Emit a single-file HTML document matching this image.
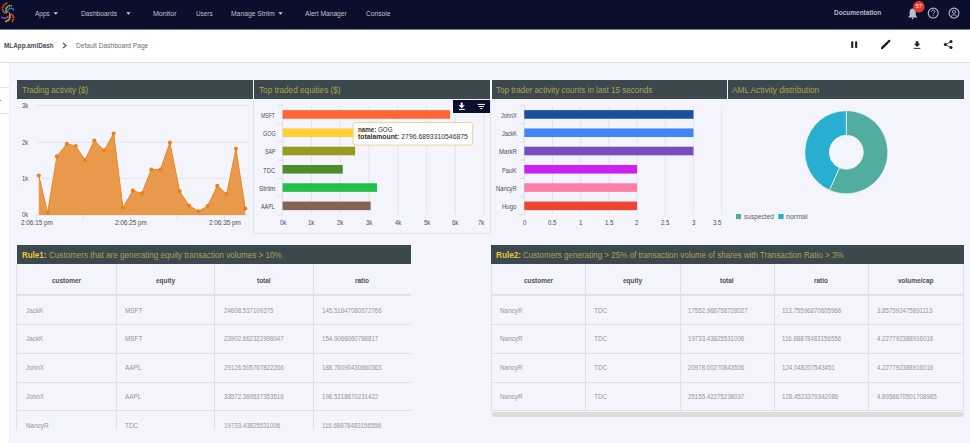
<!DOCTYPE html>
<html><head><meta charset="utf-8">
<style>
html,body{margin:0;padding:0;}
body{width:970px;height:443px;overflow:hidden;position:relative;background:#f4f4fc;font-family:"Liberation Sans",sans-serif;-webkit-font-smoothing:antialiased;}
.t{position:absolute;white-space:nowrap;transform-origin:0 0;}
.b{position:absolute;background:#e0e0e6;}
#nav{position:absolute;left:0;top:0;width:970px;height:29px;background:#0b0e2d;}
#navline{position:absolute;left:0;top:29px;width:970px;height:1px;background:#7d7f90;}
#crumb{position:absolute;left:0;top:30px;width:970px;height:32px;background:#fff;}
#crumbline{position:absolute;left:0;top:62px;width:970px;height:1px;background:#dcdce4;}
#strip{position:absolute;left:0;top:63px;width:9px;height:380px;background:#fff;border-right:1px solid #efeff5;}
.hdr{position:absolute;top:80px;height:18.8px;background:#3b494f;}
.rhdr{position:absolute;top:245px;height:19px;background:#3b494f;}
</style></head><body>
<div id="nav"></div>
<div id="navline"></div>
<div id="crumb"></div>
<div id="crumbline"></div>
<div id="strip"></div>
<div class="b" style="left:0;top:87px;width:9px;height:1px;background:#dde6ea"></div>
<div class="b" style="left:0;top:113px;width:9px;height:1px;background:#dde6ea"></div>
<div class="b" style="left:0;top:100px;width:1.3px;height:1px;background:#8a8a8a"></div>

<!-- panel borders row1 -->
<div class="b" style="left:253px;top:98.8px;width:1px;height:135px;background:#e2e2e8"></div>
<div class="b" style="left:489.5px;top:98.8px;width:1px;height:135px;background:#e2e2e8"></div>
<div class="b" style="left:253px;top:233px;width:237px;height:1px;background:#e2e2e8"></div>

<div class="hdr" style="left:17.2px;width:235.4px"></div>
<div class="hdr" style="left:254.2px;width:235.6px"></div>
<div class="hdr" style="left:491.5px;width:235.5px"></div>
<div class="hdr" style="left:728.1px;width:235.9px"></div>

<div class="rhdr" style="left:17.2px;width:393.6px"></div>
<div class="rhdr" style="left:491.3px;width:472.4px"></div>

<div class=b style='left:16px;top:264px;width:1px;height:166px'></div>
<div class=b style='left:116px;top:264px;width:1px;height:166px'></div>
<div class=b style='left:214px;top:264px;width:1px;height:166px'></div>
<div class=b style='left:313px;top:264px;width:1px;height:166px'></div>
<div class=b style='left:16px;top:293.6px;width:395px;height:2px'></div>
<div class=b style='left:16px;top:324px;width:395px;height:1px'></div>
<div class=b style='left:16px;top:353px;width:395px;height:1px'></div>
<div class=b style='left:16px;top:382px;width:395px;height:1px'></div>
<div class=b style='left:16px;top:410px;width:395px;height:1px'></div>
<div class=b style='left:491px;top:264px;width:1px;height:148px'></div>
<div class=b style='left:585px;top:264px;width:1px;height:148px'></div>
<div class=b style='left:680px;top:264px;width:1px;height:148px'></div>
<div class=b style='left:774px;top:264px;width:1px;height:148px'></div>
<div class=b style='left:868px;top:264px;width:1px;height:148px'></div>
<div class=b style='left:963px;top:264px;width:1px;height:148px'></div>
<div class=b style='left:491px;top:293.6px;width:472px;height:2px'></div>
<div class=b style='left:491px;top:324px;width:472px;height:1px'></div>
<div class=b style='left:491px;top:353px;width:472px;height:1px'></div>
<div class=b style='left:491px;top:382px;width:472px;height:1px'></div>
<div class=b style='left:491px;top:410px;width:472px;height:1px'></div>
<div style='position:absolute;left:491.5px;top:411.8px;width:472px;height:4.8px;border-radius:2.4px;background:#dcdcdc'></div>

<svg width="970" height="443" style="position:absolute;left:0;top:0">
<line x1='37' y1='105.4' x2='248' y2='105.4' stroke='#dfdfe7' stroke-width='0.8'/>
<line x1='37' y1='142.3' x2='248' y2='142.3' stroke='#dfdfe7' stroke-width='0.8'/>
<line x1='37' y1='178.4' x2='248' y2='178.4' stroke='#dfdfe7' stroke-width='0.8'/>
<line x1='37' y1='214.9' x2='248' y2='214.9' stroke='#d8d8e0' stroke-width='0.8'/>
<line x1='36.6' y1='214.9' x2='36.6' y2='219.8' stroke='#d8d8e0' stroke-width='0.8'/>
<line x1='83.5' y1='214.9' x2='83.5' y2='219.8' stroke='#d8d8e0' stroke-width='0.8'/>
<line x1='130.5' y1='214.9' x2='130.5' y2='219.8' stroke='#d8d8e0' stroke-width='0.8'/>
<line x1='177.5' y1='214.9' x2='177.5' y2='219.8' stroke='#d8d8e0' stroke-width='0.8'/>
<line x1='224.4' y1='214.9' x2='224.4' y2='219.8' stroke='#d8d8e0' stroke-width='0.8'/>
<polygon points='38.8,214.9 38.8,175.5 47.6,212.7 56.9,156.4 66.8,143.9 75.7,146 85.0,160.1 94.3,140.6 104.1,150.4 113.7,133.5 122.9,207.6 132.9,190.7 141.8,193.4 151.3,169.6 160.4,169.6 169.9,142.6 179.6,191.2 189,205.6 198.4,211.3 207.6,206.1 217.3,185.8 226.7,194 235.9,148.8 245.3,208.6 245.3,214.9' fill='#e9994b' />
<polyline points='38.8,175.5 47.6,212.7 56.9,156.4 66.8,143.9 75.7,146 85.0,160.1 94.3,140.6 104.1,150.4 113.7,133.5 122.9,207.6 132.9,190.7 141.8,193.4 151.3,169.6 160.4,169.6 169.9,142.6 179.6,191.2 189,205.6 198.4,211.3 207.6,206.1 217.3,185.8 226.7,194 235.9,148.8 245.3,208.6' fill='none' stroke='#e8891f' stroke-width='1'/>
<circle cx='38.8' cy='175.5' r='2.1' fill='#e8841a'/>
<circle cx='47.6' cy='212.7' r='2.1' fill='#e8841a'/>
<circle cx='56.9' cy='156.4' r='2.1' fill='#e8841a'/>
<circle cx='66.8' cy='143.9' r='2.1' fill='#e8841a'/>
<circle cx='75.7' cy='146' r='2.1' fill='#e8841a'/>
<circle cx='85.0' cy='160.1' r='2.1' fill='#e8841a'/>
<circle cx='94.3' cy='140.6' r='2.1' fill='#e8841a'/>
<circle cx='104.1' cy='150.4' r='2.1' fill='#e8841a'/>
<circle cx='113.7' cy='133.5' r='2.1' fill='#e8841a'/>
<circle cx='122.9' cy='207.6' r='2.1' fill='#e8841a'/>
<circle cx='132.9' cy='190.7' r='2.1' fill='#e8841a'/>
<circle cx='141.8' cy='193.4' r='2.1' fill='#e8841a'/>
<circle cx='151.3' cy='169.6' r='2.1' fill='#e8841a'/>
<circle cx='160.4' cy='169.6' r='2.1' fill='#e8841a'/>
<circle cx='169.9' cy='142.6' r='2.1' fill='#e8841a'/>
<circle cx='179.6' cy='191.2' r='2.1' fill='#e8841a'/>
<circle cx='189' cy='205.6' r='2.1' fill='#e8841a'/>
<circle cx='198.4' cy='211.3' r='2.1' fill='#e8841a'/>
<circle cx='207.6' cy='206.1' r='2.1' fill='#e8841a'/>
<circle cx='217.3' cy='185.8' r='2.1' fill='#e8841a'/>
<circle cx='226.7' cy='194' r='2.1' fill='#e8841a'/>
<circle cx='235.9' cy='148.8' r='2.1' fill='#e8841a'/>
<circle cx='245.3' cy='208.6' r='2.1' fill='#e8841a'/>
<line x1='311.38' y1='105.3' x2='311.38' y2='214.6' stroke='#dfdfe7' stroke-width='0.8'/>
<line x1='340.16' y1='105.3' x2='340.16' y2='214.6' stroke='#dfdfe7' stroke-width='0.8'/>
<line x1='368.94000000000005' y1='105.3' x2='368.94000000000005' y2='214.6' stroke='#dfdfe7' stroke-width='0.8'/>
<line x1='397.72' y1='105.3' x2='397.72' y2='214.6' stroke='#dfdfe7' stroke-width='0.8'/>
<line x1='426.5' y1='105.3' x2='426.5' y2='214.6' stroke='#dfdfe7' stroke-width='0.8'/>
<line x1='455.28000000000003' y1='105.3' x2='455.28000000000003' y2='214.6' stroke='#dfdfe7' stroke-width='0.8'/>
<line x1='484.06000000000006' y1='105.3' x2='484.06000000000006' y2='214.6' stroke='#dfdfe7' stroke-width='0.8'/>
<line x1='282.6' y1='105.3' x2='282.6' y2='215' stroke='#dadae2' stroke-width='0.8'/>
<line x1='277.4' y1='105.30' x2='282.6' y2='105.30' stroke='#d8d8e0' stroke-width='0.8'/>
<line x1='277.4' y1='123.58' x2='282.6' y2='123.58' stroke='#d8d8e0' stroke-width='0.8'/>
<line x1='277.4' y1='141.87' x2='282.6' y2='141.87' stroke='#d8d8e0' stroke-width='0.8'/>
<line x1='277.4' y1='160.15' x2='282.6' y2='160.15' stroke='#d8d8e0' stroke-width='0.8'/>
<line x1='277.4' y1='178.43' x2='282.6' y2='178.43' stroke='#d8d8e0' stroke-width='0.8'/>
<line x1='277.4' y1='196.72' x2='282.6' y2='196.72' stroke='#d8d8e0' stroke-width='0.8'/>
<line x1='277.4' y1='215.00' x2='282.6' y2='215.00' stroke='#d8d8e0' stroke-width='0.8'/>
<rect x='282.6' y='110.14' width='167.50' height='8.6' fill='#ff6633'/>
<rect x='282.6' y='128.42' width='80.50' height='8.6' fill='#ffd033'/>
<rect x='282.6' y='146.71' width='72.53' height='8.6' fill='#999a22'/>
<rect x='282.6' y='164.99' width='60.15' height='8.6' fill='#4e8b2a'/>
<rect x='282.6' y='183.27' width='94.40' height='8.6' fill='#22c048'/>
<rect x='282.6' y='201.56' width='88.07' height='8.6' fill='#866455'/>
<line x1='552.5' y1='105.3' x2='552.5' y2='214.6' stroke='#dfdfe7' stroke-width='0.8'/>
<line x1='580.6999999999999' y1='105.3' x2='580.6999999999999' y2='214.6' stroke='#dfdfe7' stroke-width='0.8'/>
<line x1='608.9' y1='105.3' x2='608.9' y2='214.6' stroke='#dfdfe7' stroke-width='0.8'/>
<line x1='637.0999999999999' y1='105.3' x2='637.0999999999999' y2='214.6' stroke='#dfdfe7' stroke-width='0.8'/>
<line x1='665.3' y1='105.3' x2='665.3' y2='214.6' stroke='#dfdfe7' stroke-width='0.8'/>
<line x1='693.5' y1='105.3' x2='693.5' y2='214.6' stroke='#dfdfe7' stroke-width='0.8'/>
<line x1='721.6999999999999' y1='105.3' x2='721.6999999999999' y2='214.6' stroke='#dfdfe7' stroke-width='0.8'/>
<line x1='524.3' y1='105.3' x2='524.3' y2='215' stroke='#dadae2' stroke-width='0.8'/>
<line x1='519.1' y1='105.30' x2='524.3' y2='105.30' stroke='#d8d8e0' stroke-width='0.8'/>
<line x1='519.1' y1='123.58' x2='524.3' y2='123.58' stroke='#d8d8e0' stroke-width='0.8'/>
<line x1='519.1' y1='141.87' x2='524.3' y2='141.87' stroke='#d8d8e0' stroke-width='0.8'/>
<line x1='519.1' y1='160.15' x2='524.3' y2='160.15' stroke='#d8d8e0' stroke-width='0.8'/>
<line x1='519.1' y1='178.43' x2='524.3' y2='178.43' stroke='#d8d8e0' stroke-width='0.8'/>
<line x1='519.1' y1='196.72' x2='524.3' y2='196.72' stroke='#d8d8e0' stroke-width='0.8'/>
<line x1='519.1' y1='215.00' x2='524.3' y2='215.00' stroke='#d8d8e0' stroke-width='0.8'/>
<rect x='524.3' y='110.14' width='169.20' height='8.6' fill='#1a4f99'/>
<rect x='524.3' y='128.42' width='169.20' height='8.6' fill='#4285f4'/>
<rect x='524.3' y='146.71' width='169.20' height='8.6' fill='#764dbd'/>
<rect x='524.3' y='164.99' width='112.80' height='8.6' fill='#cc22ee'/>
<rect x='524.3' y='183.27' width='112.80' height='8.6' fill='#ff7ba8'/>
<rect x='524.3' y='201.56' width='112.80' height='8.6' fill='#ee4433'/>
<path d='M846.30,110.70 A41.5,41.5 0 1 1 829.49,190.14 L839.41,167.74 A17.0,17.0 0 1 0 846.30,135.20 Z' fill='#51ad9d' stroke='#f4f4fc' stroke-width='0.7' stroke-linejoin='round'/>
<path d='M829.49,190.14 A41.5,41.5 0 0 1 846.30,110.70 L846.30,135.20 A17.0,17.0 0 0 0 839.41,167.74 Z' fill='#27aed0' stroke='#f4f4fc' stroke-width='0.7' stroke-linejoin='round'/>
<rect x='736' y='214' width='5.1' height='5.1' fill='#51ad9d'/>
<rect x='778.3' y='214' width='5.3' height='5.1' fill='#27aed0'/>
<rect x='353.1' y='122.6' width='119.6' height='22.5' rx='2' fill='rgba(255,255,255,0.82)' stroke='#f0d38c' stroke-width='1'/>
</svg>

<!-- chart toolbar -->
<div style="position:absolute;left:453.1px;top:100.2px;width:36.7px;height:12.6px;background:#0b0e2d"></div>
<svg width="970" height="443" style="position:absolute;left:0;top:0">
  <!-- download icon in toolbar -->
  <g fill="#ffffff">
    <rect x="460.7" y="102.6" width="2" height="3"/>
    <path d="M458.6,105.2 L464.8,105.2 L461.7,108.2 Z"/>
    <rect x="459" y="108.9" width="5.8" height="1"/>
    <rect x="477.6" y="103.9" width="7.4" height="1"/>
    <rect x="478.8" y="106" width="5" height="1"/>
    <rect x="480.4" y="108" width="1.9" height="1"/>
  </g>
  <!-- logo -->
  <g fill="none" stroke-linecap="round" stroke-width="1.9" stroke-dasharray="0 2.0">
    <path d="M6.6,3.3 C4,4.3 2.4,6.5 2.5,9 C2.6,11.3 4.3,12.8 6.6,13.3" stroke="#e4472b"/>
    <path d="M11.2,5.6 C9.5,5.4 7.8,6.2 6.6,7.6 C5.5,8.9 5.6,11 6.5,12.3" stroke="#86bf2c"/>
    <path d="M13.4,9.5 C12.4,8.2 10.8,7.9 9.4,8.5 C8.1,9.1 7.4,10.8 7.6,12.6" stroke="#2b8fd9"/>
    <path d="M9.4,13.3 C12.2,14 13.7,16 13.5,18.4 C13.3,20.3 12.3,21.6 10.8,22.1" stroke="#e4472b"/>
    <path d="M9.8,15.2 C10.4,17.2 9.8,19.2 8.2,20.4 C7.3,21 6.2,21.3 5,21.2" stroke="#f2b81b"/>
    <path d="M2.2,17.4 C3.9,18.6 6.6,18.5 8.3,16.5" stroke="#9a50c9"/>
  </g>
  <!-- nav carets -->
  <g fill="#d0d3de">
    <path d="M53.6,12.3 L57.9,12.3 L55.75,14.7 Z"/>
    <path d="M126.3,12.3 L130.6,12.3 L128.45,14.7 Z"/>
    <path d="M278.4,12.3 L282.7,12.3 L280.55,14.7 Z"/>
  </g>
  <!-- bell -->
  <g fill="#b9bdc6">
    <path d="M912.7,8.6 C910.6,8.6 909.6,10.3 909.6,12.3 L909.6,15.6 L908.3,16.9 L908.3,17.4 L917.1,17.4 L917.1,16.9 L915.8,15.6 L915.8,12.3 C915.8,10.3 914.8,8.6 912.7,8.6 Z"/>
    <circle cx="912.7" cy="18.3" r="0.9"/>
  </g>
  <circle cx="918.9" cy="6.7" r="5.7" fill="#e8382d"/>
  <!-- help -->
  <circle cx="933.2" cy="13.1" r="4.95" fill="none" stroke="#b9bdc6" stroke-width="1.1"/>
  <path d="M931.5,11.9 C931.5,10.7 932.3,10.1 933.2,10.1 C934.1,10.1 934.9,10.7 934.9,11.6 C934.9,12.7 933.3,12.9 933.3,14.3" fill="none" stroke="#b9bdc6" stroke-width="0.9"/>
  <circle cx="933.3" cy="15.7" r="0.55" fill="#b9bdc6"/>
  <!-- user -->
  <circle cx="954" cy="13.1" r="4.95" fill="none" stroke="#b9bdc6" stroke-width="1.1"/>
  <circle cx="954" cy="11.8" r="1.6" fill="none" stroke="#b9bdc6" stroke-width="0.9"/>
  <path d="M950.9,16.6 C951.8,15.2 953,14.9 954,14.9 C955,14.9 956.2,15.2 957.1,16.6" fill="none" stroke="#b9bdc6" stroke-width="0.9"/>
  <!-- breadcrumb chevron -->
  <path d="M63,42.9 L65.9,45.5 L63,48.1" fill="none" stroke="#4b4b57" stroke-width="1.2"/>
  <!-- toolbar icons -->
  <g fill="#1f1f24">
    <rect x="851.2" y="41.3" width="2.1" height="6.6" rx="0.6"/>
    <rect x="855.1" y="41.3" width="2.1" height="6.6" rx="0.6"/>
    
    
    <path d="M915.8,41.3 L918.4,41.3 L918.4,43.8 L920.3,43.8 L917.1,47 L913.9,43.8 L915.8,43.8 Z"/>
    <rect x="913.8" y="47.9" width="6.6" height="0.9"/>
    <circle cx="951" cy="41.6" r="1.5"/>
    <circle cx="945.3" cy="44.6" r="1.5"/>
    <circle cx="951" cy="47.6" r="1.5"/>
  </g>
  <path d="M951,41.6 L945.3,44.6 L951,47.6" fill="none" stroke="#1f1f24" stroke-width="0.8"/>
  <path d="M882.4,47.7 L887.3,42.8" stroke="#1f1f24" stroke-width="2.5" stroke-linecap="round"/>
  <path d="M882.2,48.2 L881.6,48.6" stroke="#1f1f24" stroke-width="1.2" stroke-linecap="round"/>
  <path d="M888.6,41.5 L889.1,41" stroke="#1f1f24" stroke-width="2.5" stroke-linecap="round"/>
</svg>

<div class=t style='left:34.60px;top:9.70px;font-size:7.8px;line-height:7.8px;color:#bfc2ce;font-weight:400;transform:scaleX(0.8333)'>Apps</div>
<div class=t style='left:80.50px;top:9.70px;font-size:7.8px;line-height:7.8px;color:#bfc2ce;font-weight:400;transform:scaleX(0.8571)'>Dashboards</div>
<div class=t style='left:153.20px;top:9.70px;font-size:7.8px;line-height:7.8px;color:#bfc2ce;font-weight:400;transform:scaleX(0.9038)'>Monitor</div>
<div class=t style='left:195.80px;top:9.70px;font-size:7.8px;line-height:7.8px;color:#bfc2ce;font-weight:400;transform:scaleX(0.8150)'>Users</div>
<div class=t style='left:230.80px;top:9.70px;font-size:7.8px;line-height:7.8px;color:#bfc2ce;font-weight:400;transform:scaleX(0.8660)'>Manage Striim</div>
<div class=t style='left:305.10px;top:9.70px;font-size:7.8px;line-height:7.8px;color:#bfc2ce;font-weight:400;transform:scaleX(0.8510)'>Alert Manager</div>
<div class=t style='left:365.70px;top:9.70px;font-size:7.8px;line-height:7.8px;color:#bfc2ce;font-weight:400;transform:scaleX(0.8571)'>Console</div>
<div class=t style='left:833.60px;top:9.44px;font-size:7.4px;line-height:7.4px;color:#b6b9c5;font-weight:700;transform:scaleX(0.8796)'>Documentation</div>
<div class=t style='left:915.80px;top:4.06px;font-size:5.6px;line-height:5.6px;color:#ffffff;font-weight:400;transform:scaleX(1.0000)'>57</div>
<div class=t style='left:3.60px;top:42.13px;font-size:8px;line-height:8px;color:#4b4b57;font-weight:700;transform:scaleX(0.7937)'>MLApp.amlDash</div>
<div class=t style='left:75.90px;top:42.13px;font-size:8px;line-height:8px;color:#6e6e7a;font-weight:400;transform:scaleX(0.8250)'>Default Dashboard Page</div>
<div class=t style='left:22.40px;top:85.70px;font-size:8.5px;line-height:8.5px;color:#b0a04c;font-weight:400;transform:scaleX(0.9507)'>Trading activity ($)</div>
<div class=t style='left:259.30px;top:85.70px;font-size:8.5px;line-height:8.5px;color:#b0a04c;font-weight:400;transform:scaleX(0.9643)'>Top traded equities ($)</div>
<div class=t style='left:496.10px;top:85.70px;font-size:8.5px;line-height:8.5px;color:#b0a04c;font-weight:400;transform:scaleX(0.9503)'>Top trader activity counts in last 15 seconds</div>
<div class=t style='left:732.20px;top:85.70px;font-size:8.5px;line-height:8.5px;color:#b0a04c;font-weight:400;transform:scaleX(0.9753)'>AML Activity distribution</div>
<div class=t style='left:22.40px;top:251.00px;font-size:8.5px;line-height:8.5px;color:#efc534;font-weight:700;transform:scaleX(0.9346)'>Rule1:</div>
<div class=t style='left:49.30px;top:251.00px;font-size:8.5px;line-height:8.5px;color:#b0a04c;font-weight:400;transform:scaleX(0.9518)'>Customers that are generating equity transaction volumes &gt; 10%</div>
<div class=t style='left:495.70px;top:251.00px;font-size:8.5px;line-height:8.5px;color:#efc534;font-weight:700;transform:scaleX(0.9654)'>Rule2:</div>
<div class=t style='left:522.80px;top:251.00px;font-size:8.5px;line-height:8.5px;color:#b0a04c;font-weight:400;transform:scaleX(0.9463)'>Customers generating &gt; 25% of transaction volume of shares with Transaction Ratio &gt; 3%</div>
<div class=t style='left:22.40px;top:102.97px;font-size:6.3px;line-height:6.3px;color:#4e4e56;font-weight:400;transform:scaleX(0.9286)'>3k</div>
<div class=t style='left:22.40px;top:139.87px;font-size:6.3px;line-height:6.3px;color:#4e4e56;font-weight:400;transform:scaleX(0.9286)'>2k</div>
<div class=t style='left:22.40px;top:175.97px;font-size:6.3px;line-height:6.3px;color:#4e4e56;font-weight:400;transform:scaleX(0.9286)'>1k</div>
<div class=t style='left:22.40px;top:212.47px;font-size:6.3px;line-height:6.3px;color:#4e4e56;font-weight:400;transform:scaleX(0.9286)'>0k</div>
<div class=t style='left:21.20px;top:219.54px;font-size:6.8px;line-height:6.8px;color:#4e4e56;font-weight:400;transform:scaleX(0.9353)'>2:06:15 pm</div>
<div class=t style='left:115.10px;top:219.54px;font-size:6.8px;line-height:6.8px;color:#4e4e56;font-weight:400;transform:scaleX(0.9353)'>2:06:25 pm</div>
<div class=t style='left:208.80px;top:219.54px;font-size:6.8px;line-height:6.8px;color:#4e4e56;font-weight:400;transform:scaleX(0.9353)'>2:06:35 pm</div>
<div class=t style='left:261.10px;top:112.65px;font-size:6.6px;line-height:6.6px;color:#4e4e56;font-weight:400;transform:scaleX(0.7778)'>MSFT</div>
<div class=t style='left:262.70px;top:130.94px;font-size:6.6px;line-height:6.6px;color:#4e4e56;font-weight:400;transform:scaleX(0.8267)'>GOG</div>
<div class=t style='left:264.60px;top:149.22px;font-size:6.6px;line-height:6.6px;color:#4e4e56;font-weight:400;transform:scaleX(0.8077)'>SAP</div>
<div class=t style='left:263.30px;top:167.50px;font-size:6.6px;line-height:6.6px;color:#4e4e56;font-weight:400;transform:scaleX(0.9077)'>TDC</div>
<div class=t style='left:258.50px;top:185.79px;font-size:6.6px;line-height:6.6px;color:#4e4e56;font-weight:400;transform:scaleX(0.9765)'>Striim</div>
<div class=t style='left:261.10px;top:204.07px;font-size:6.6px;line-height:6.6px;color:#4e4e56;font-weight:400;transform:scaleX(0.8235)'>AAPL</div>
<div class=t style='left:279.68px;top:219.61px;font-size:6.6px;line-height:6.6px;color:#4e4e56;font-weight:400;transform:scaleX(0.9200)'>0k</div>
<div class=t style='left:308.46px;top:219.61px;font-size:6.6px;line-height:6.6px;color:#4e4e56;font-weight:400;transform:scaleX(0.9200)'>1k</div>
<div class=t style='left:337.24px;top:219.61px;font-size:6.6px;line-height:6.6px;color:#4e4e56;font-weight:400;transform:scaleX(0.9200)'>2k</div>
<div class=t style='left:366.02px;top:219.61px;font-size:6.6px;line-height:6.6px;color:#4e4e56;font-weight:400;transform:scaleX(0.9200)'>3k</div>
<div class=t style='left:394.80px;top:219.61px;font-size:6.6px;line-height:6.6px;color:#4e4e56;font-weight:400;transform:scaleX(0.9200)'>4k</div>
<div class=t style='left:423.58px;top:219.61px;font-size:6.6px;line-height:6.6px;color:#4e4e56;font-weight:400;transform:scaleX(0.9200)'>5k</div>
<div class=t style='left:452.36px;top:219.61px;font-size:6.6px;line-height:6.6px;color:#4e4e56;font-weight:400;transform:scaleX(0.9200)'>6k</div>
<div class=t style='left:477.58px;top:219.61px;font-size:6.6px;line-height:6.6px;color:#4e4e56;font-weight:400;transform:scaleX(0.9200)'>7k</div>
<div class=t style='left:500.60px;top:112.65px;font-size:6.6px;line-height:6.6px;color:#4e4e56;font-weight:400;transform:scaleX(0.8368)'>JohnX</div>
<div class=t style='left:501.50px;top:130.94px;font-size:6.6px;line-height:6.6px;color:#4e4e56;font-weight:400;transform:scaleX(0.8333)'>JackK</div>
<div class=t style='left:499.00px;top:149.22px;font-size:6.6px;line-height:6.6px;color:#4e4e56;font-weight:400;transform:scaleX(0.9211)'>MarkR</div>
<div class=t style='left:501.60px;top:167.50px;font-size:6.6px;line-height:6.6px;color:#4e4e56;font-weight:400;transform:scaleX(0.8278)'>PaulK</div>
<div class=t style='left:496.20px;top:185.79px;font-size:6.6px;line-height:6.6px;color:#4e4e56;font-weight:400;transform:scaleX(0.8826)'>NancyR</div>
<div class=t style='left:501.90px;top:204.07px;font-size:6.6px;line-height:6.6px;color:#4e4e56;font-weight:400;transform:scaleX(0.9125)'>Hugo</div>
<div class=t style='left:522.56px;top:219.61px;font-size:6.6px;line-height:6.6px;color:#4e4e56;font-weight:400;transform:scaleX(0.9200)'>0</div>
<div class=t style='left:548.46px;top:219.61px;font-size:6.6px;line-height:6.6px;color:#4e4e56;font-weight:400;transform:scaleX(0.9200)'>0.5</div>
<div class=t style='left:578.96px;top:219.61px;font-size:6.6px;line-height:6.6px;color:#4e4e56;font-weight:400;transform:scaleX(0.9200)'>1</div>
<div class=t style='left:604.86px;top:219.61px;font-size:6.6px;line-height:6.6px;color:#4e4e56;font-weight:400;transform:scaleX(0.9200)'>1.5</div>
<div class=t style='left:635.36px;top:219.61px;font-size:6.6px;line-height:6.6px;color:#4e4e56;font-weight:400;transform:scaleX(0.9200)'>2</div>
<div class=t style='left:661.26px;top:219.61px;font-size:6.6px;line-height:6.6px;color:#4e4e56;font-weight:400;transform:scaleX(0.9200)'>2.5</div>
<div class=t style='left:691.76px;top:219.61px;font-size:6.6px;line-height:6.6px;color:#4e4e56;font-weight:400;transform:scaleX(0.9200)'>3</div>
<div class=t style='left:713.16px;top:219.61px;font-size:6.6px;line-height:6.6px;color:#4e4e56;font-weight:400;transform:scaleX(0.9200)'>3.5</div>
<div class=t style='left:743.50px;top:212.67px;font-size:7.6px;line-height:7.6px;color:#5c5c66;font-weight:400;transform:scaleX(0.8657)'>suspected</div>
<div class=t style='left:785.70px;top:212.67px;font-size:7.6px;line-height:7.6px;color:#5c5c66;font-weight:400;transform:scaleX(0.9261)'>normal</div>
<div class=t style='left:357.80px;top:127.28px;font-size:6.4px;line-height:6.4px;color:#333333;font-weight:400;transform:scaleX(0.9714)'><b>name:</b> GOG</div>
<div class=t style='left:357.80px;top:133.98px;font-size:6.4px;line-height:6.4px;color:#333333;font-weight:400;transform:scaleX(1.0699)'><b>totalamount:</b> 2796.6893310546875</div>
<div class=t style='left:51.78px;top:277.07px;font-size:7px;line-height:7px;color:#4e4e56;font-weight:700;transform:scaleX(0.9200)'>customer</div>
<div class=t style='left:155.84px;top:277.07px;font-size:7px;line-height:7px;color:#4e4e56;font-weight:700;transform:scaleX(0.9200)'>equity</div>
<div class=t style='left:257.35px;top:277.07px;font-size:7px;line-height:7px;color:#4e4e56;font-weight:700;transform:scaleX(0.9200)'>total</div>
<div class=t style='left:355.35px;top:277.07px;font-size:7px;line-height:7px;color:#4e4e56;font-weight:700;transform:scaleX(0.9200)'>ratio</div>
<div class=t style='left:523.78px;top:277.07px;font-size:7px;line-height:7px;color:#4e4e56;font-weight:700;transform:scaleX(0.9200)'>customer</div>
<div class=t style='left:623.09px;top:277.07px;font-size:7px;line-height:7px;color:#4e4e56;font-weight:700;transform:scaleX(0.9200)'>equity</div>
<div class=t style='left:720.10px;top:277.07px;font-size:7px;line-height:7px;color:#4e4e56;font-weight:700;transform:scaleX(0.9200)'>total</div>
<div class=t style='left:814.35px;top:277.07px;font-size:7px;line-height:7px;color:#4e4e56;font-weight:700;transform:scaleX(0.9200)'>ratio</div>
<div class=t style='left:898.06px;top:277.07px;font-size:7px;line-height:7px;color:#4e4e56;font-weight:700;transform:scaleX(0.9200)'>volume/cap</div>
<div class=t style='left:25.80px;top:306.67px;font-size:7px;line-height:7px;color:#94949c;font-weight:400;transform:scaleX(0.9100)'>JackK</div>
<div class=t style='left:124.80px;top:306.67px;font-size:7px;line-height:7px;color:#94949c;font-weight:400;transform:scaleX(0.9100)'>MSFT</div>
<div class=t style='left:223.80px;top:306.67px;font-size:7px;line-height:7px;color:#94949c;font-weight:400;transform:scaleX(0.8750)'>24608.537109375</div>
<div class=t style='left:322.30px;top:306.67px;font-size:7px;line-height:7px;color:#94949c;font-weight:400;transform:scaleX(0.8750)'>145.51647080572766</div>
<div class=t style='left:25.80px;top:335.47px;font-size:7px;line-height:7px;color:#94949c;font-weight:400;transform:scaleX(0.9100)'>JackK</div>
<div class=t style='left:124.80px;top:335.47px;font-size:7px;line-height:7px;color:#94949c;font-weight:400;transform:scaleX(0.9100)'>MSFT</div>
<div class=t style='left:223.80px;top:335.47px;font-size:7px;line-height:7px;color:#94949c;font-weight:400;transform:scaleX(0.8750)'>23902.662322998047</div>
<div class=t style='left:322.30px;top:335.47px;font-size:7px;line-height:7px;color:#94949c;font-weight:400;transform:scaleX(0.8750)'>154.9066060786817</div>
<div class=t style='left:25.80px;top:364.27px;font-size:7px;line-height:7px;color:#94949c;font-weight:400;transform:scaleX(0.9100)'>JohnX</div>
<div class=t style='left:124.80px;top:364.27px;font-size:7px;line-height:7px;color:#94949c;font-weight:400;transform:scaleX(0.9100)'>AAPL</div>
<div class=t style='left:223.80px;top:364.27px;font-size:7px;line-height:7px;color:#94949c;font-weight:400;transform:scaleX(0.8750)'>29126.505767822266</div>
<div class=t style='left:322.30px;top:364.27px;font-size:7px;line-height:7px;color:#94949c;font-weight:400;transform:scaleX(0.8750)'>188.76090430660363</div>
<div class=t style='left:25.80px;top:393.27px;font-size:7px;line-height:7px;color:#94949c;font-weight:400;transform:scaleX(0.9100)'>JohnX</div>
<div class=t style='left:124.80px;top:393.27px;font-size:7px;line-height:7px;color:#94949c;font-weight:400;transform:scaleX(0.9100)'>AAPL</div>
<div class=t style='left:223.80px;top:393.27px;font-size:7px;line-height:7px;color:#94949c;font-weight:400;transform:scaleX(0.8750)'>33572.369537353516</div>
<div class=t style='left:322.30px;top:393.27px;font-size:7px;line-height:7px;color:#94949c;font-weight:400;transform:scaleX(0.8750)'>198.5218670231422</div>
<div class=t style='left:25.80px;top:422.07px;font-size:7px;line-height:7px;color:#94949c;font-weight:400;transform:scaleX(0.9100)'>NancyR</div>
<div class=t style='left:124.80px;top:422.07px;font-size:7px;line-height:7px;color:#94949c;font-weight:400;transform:scaleX(0.9100)'>TDC</div>
<div class=t style='left:223.80px;top:422.07px;font-size:7px;line-height:7px;color:#94949c;font-weight:400;transform:scaleX(0.8750)'>19733.43825531006</div>
<div class=t style='left:322.30px;top:422.07px;font-size:7px;line-height:7px;color:#94949c;font-weight:400;transform:scaleX(0.8750)'>116.68878483156556</div>
<div class=t style='left:499.80px;top:306.67px;font-size:7px;line-height:7px;color:#94949c;font-weight:400;transform:scaleX(0.9100)'>NancyR</div>
<div class=t style='left:593.80px;top:306.67px;font-size:7px;line-height:7px;color:#94949c;font-weight:400;transform:scaleX(0.9100)'>TDC</div>
<div class=t style='left:688.30px;top:306.67px;font-size:7px;line-height:7px;color:#94949c;font-weight:400;transform:scaleX(0.8750)'>17552.966758728027</div>
<div class=t style='left:782.30px;top:306.67px;font-size:7px;line-height:7px;color:#94949c;font-weight:400;transform:scaleX(0.8750)'>113.75596870605966</div>
<div class=t style='left:876.80px;top:306.67px;font-size:7px;line-height:7px;color:#94949c;font-weight:400;transform:scaleX(0.8750)'>3.857592475891113</div>
<div class=t style='left:499.80px;top:335.47px;font-size:7px;line-height:7px;color:#94949c;font-weight:400;transform:scaleX(0.9100)'>NancyR</div>
<div class=t style='left:593.80px;top:335.47px;font-size:7px;line-height:7px;color:#94949c;font-weight:400;transform:scaleX(0.9100)'>TDC</div>
<div class=t style='left:688.30px;top:335.47px;font-size:7px;line-height:7px;color:#94949c;font-weight:400;transform:scaleX(0.8750)'>19733.43825531006</div>
<div class=t style='left:782.30px;top:335.47px;font-size:7px;line-height:7px;color:#94949c;font-weight:400;transform:scaleX(0.8750)'>116.68878483156556</div>
<div class=t style='left:876.80px;top:335.47px;font-size:7px;line-height:7px;color:#94949c;font-weight:400;transform:scaleX(0.8750)'>4.227792388916016</div>
<div class=t style='left:499.80px;top:364.27px;font-size:7px;line-height:7px;color:#94949c;font-weight:400;transform:scaleX(0.9100)'>NancyR</div>
<div class=t style='left:593.80px;top:364.27px;font-size:7px;line-height:7px;color:#94949c;font-weight:400;transform:scaleX(0.9100)'>TDC</div>
<div class=t style='left:688.30px;top:364.27px;font-size:7px;line-height:7px;color:#94949c;font-weight:400;transform:scaleX(0.8750)'>20978.00270843506</div>
<div class=t style='left:782.30px;top:364.27px;font-size:7px;line-height:7px;color:#94949c;font-weight:400;transform:scaleX(0.8750)'>124.048207543451</div>
<div class=t style='left:876.80px;top:364.27px;font-size:7px;line-height:7px;color:#94949c;font-weight:400;transform:scaleX(0.8750)'>4.227792388916016</div>
<div class=t style='left:499.80px;top:393.27px;font-size:7px;line-height:7px;color:#94949c;font-weight:400;transform:scaleX(0.9100)'>NancyR</div>
<div class=t style='left:593.80px;top:393.27px;font-size:7px;line-height:7px;color:#94949c;font-weight:400;transform:scaleX(0.9100)'>TDC</div>
<div class=t style='left:688.30px;top:393.27px;font-size:7px;line-height:7px;color:#94949c;font-weight:400;transform:scaleX(0.8750)'>25155.42275238037</div>
<div class=t style='left:782.30px;top:393.27px;font-size:7px;line-height:7px;color:#94949c;font-weight:400;transform:scaleX(0.8750)'>128.4523379342086</div>
<div class=t style='left:876.80px;top:393.27px;font-size:7px;line-height:7px;color:#94949c;font-weight:400;transform:scaleX(0.8750)'>4.8958670501708985</div>
</body></html>
